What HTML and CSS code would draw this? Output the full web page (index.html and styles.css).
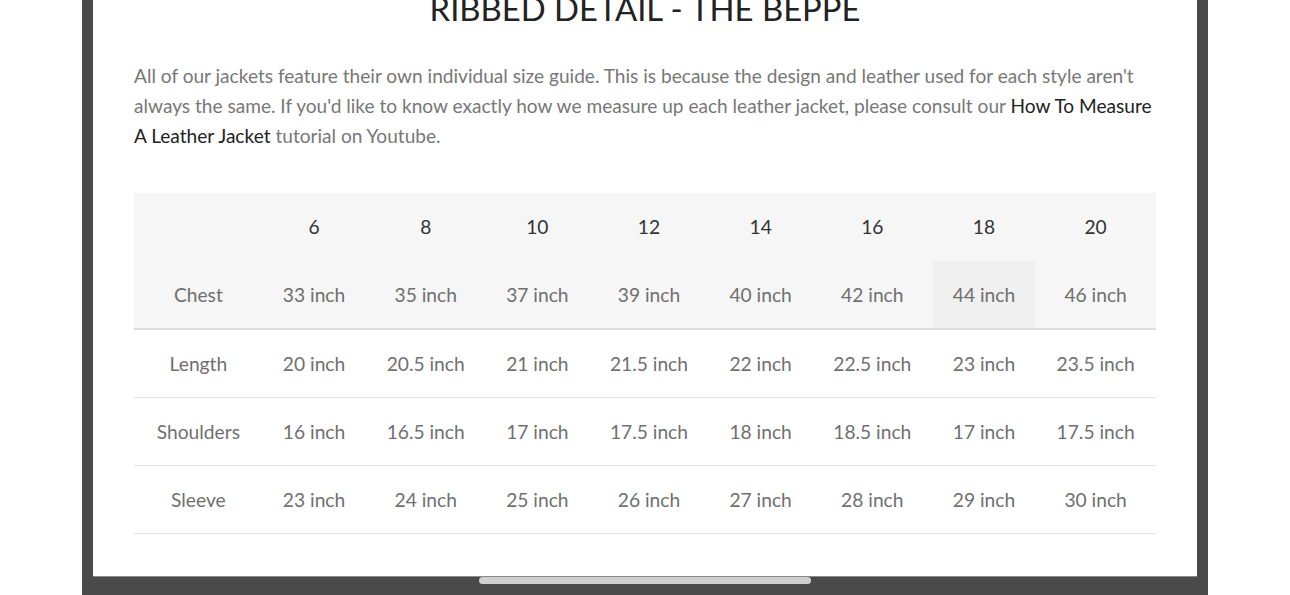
FILE: index.html
```html
<!DOCTYPE html>
<html lang="en">
<head>
    <meta charset="UTF-8">
    <meta name="viewport" content="width=device-width, initial-scale=1.0">
    <title>Size Guide - Ribbed Detail - The Beppe</title>
    <link rel="stylesheet" href="styles.css">
</head>
<body>
    <div class="frame">
        <div class="modal">
            <div class="modal-body">
                <h2 class="modal-title">RIBBED DETAIL - THE BEPPE</h2>
                <p class="intro">
                    All of our jackets feature their own individual size guide. This is because the design and leather used for each style aren't always the same. If you'd like to know exactly how we measure up each leather jacket, please consult our <a href="#">How To Measure A Leather Jacket</a> tutorial on Youtube.
                </p>

                <table class="size-table">
                    <colgroup>
                        <col class="col-label">
                        <col class="col-narrow">
                        <col class="col-wide">
                        <col class="col-narrow">
                        <col class="col-wide">
                        <col class="col-narrow">
                        <col class="col-wide">
                        <col class="col-narrow">
                        <col class="col-wide">
                    </colgroup>
                    <thead>
                        <tr class="sizes">
                            <th></th>
                            <th>6</th>
                            <th>8</th>
                            <th>10</th>
                            <th>12</th>
                            <th>14</th>
                            <th>16</th>
                            <th>18</th>
                            <th>20</th>
                        </tr>
                        <tr class="first-row">
                            <td>Chest</td>
                            <td>33 inch</td>
                            <td>35 inch</td>
                            <td>37 inch</td>
                            <td>39 inch</td>
                            <td>40 inch</td>
                            <td>42 inch</td>
                            <td class="is-hover">44 inch</td>
                            <td>46 inch</td>
                        </tr>
                    </thead>
                    <tbody>
                        <tr>
                            <td>Length</td>
                            <td>20 inch</td>
                            <td>20.5 inch</td>
                            <td>21 inch</td>
                            <td>21.5 inch</td>
                            <td>22 inch</td>
                            <td>22.5 inch</td>
                            <td>23 inch</td>
                            <td>23.5 inch</td>
                        </tr>
                        <tr>
                            <td>Shoulders</td>
                            <td>16 inch</td>
                            <td>16.5 inch</td>
                            <td>17 inch</td>
                            <td>17.5 inch</td>
                            <td>18 inch</td>
                            <td>18.5 inch</td>
                            <td>17 inch</td>
                            <td>17.5 inch</td>
                        </tr>
                        <tr>
                            <td>Sleeve</td>
                            <td>23 inch</td>
                            <td>24 inch</td>
                            <td>25 inch</td>
                            <td>26 inch</td>
                            <td>27 inch</td>
                            <td>28 inch</td>
                            <td>29 inch</td>
                            <td>30 inch</td>
                        </tr>
                    </tbody>
                </table>
            </div>
        </div>
        <div class="scroll-thumb"></div>
    </div>
</body>
</html>
```

FILE: styles.css
```css
html, body {
    margin: 0;
    height: 100%;
    overflow: hidden;
}
body {
    font-family: Lato, 'Noto Sans', sans-serif;
    background: #fff;
}
.frame {
    position: relative;
    box-sizing: border-box;
    width: 1126px;
    height: 595px;
    margin-left: 82px;
    padding: 0 11px 18px;
    background: #4a4a4a;
}
.modal {
    height: 577px;
    background: #fff;
    overflow: hidden;
    border-bottom: 1px solid #8a8a8a;
    box-sizing: border-box;
}
.modal-body {
    margin-top: -11px;
    padding: 0 41px;
}
.modal-title {
    margin: 0;
    font-size: 32.8px;
    line-height: 40px;
    font-weight: 400;
    color: #222;
    text-align: center;
}
.intro {
    margin: 32px -5px 42px 0;
    font-size: 19.1px;
    line-height: 30px;
    color: #777;
}
.intro a {
    color: #222;
    text-decoration: none;
}
.size-table {
    width: 100%;
    table-layout: fixed;
    border-collapse: collapse;
    font-size: 19.2px;
    line-height: 27px;
    text-align: center;
}
.col-label { width: 128px; }
.col-narrow { width: 102px; }
.col-wide { width: 120px; }
.size-table th,
.size-table td {
    padding: 20px 0 21px;
    font-weight: 400;
    white-space: nowrap;
}
.size-table td {
    padding: 20px 0;
    color: #6f6f6f;
    border-bottom: 1px solid #e3e3e3;
}
.size-table th {
    color: #333;
}
.size-table thead {
    background: #f6f6f6;
}
.size-table .first-row td {
    border-bottom: 2px solid #dcdcdc;
}
.size-table td.is-hover {
    background: #f0f0f0;
}
.scroll-thumb {
    position: absolute;
    left: 397px;
    top: 577px;
    width: 332px;
    height: 7px;
    border-radius: 4px;
    background: #cfcfcf;
}
```
